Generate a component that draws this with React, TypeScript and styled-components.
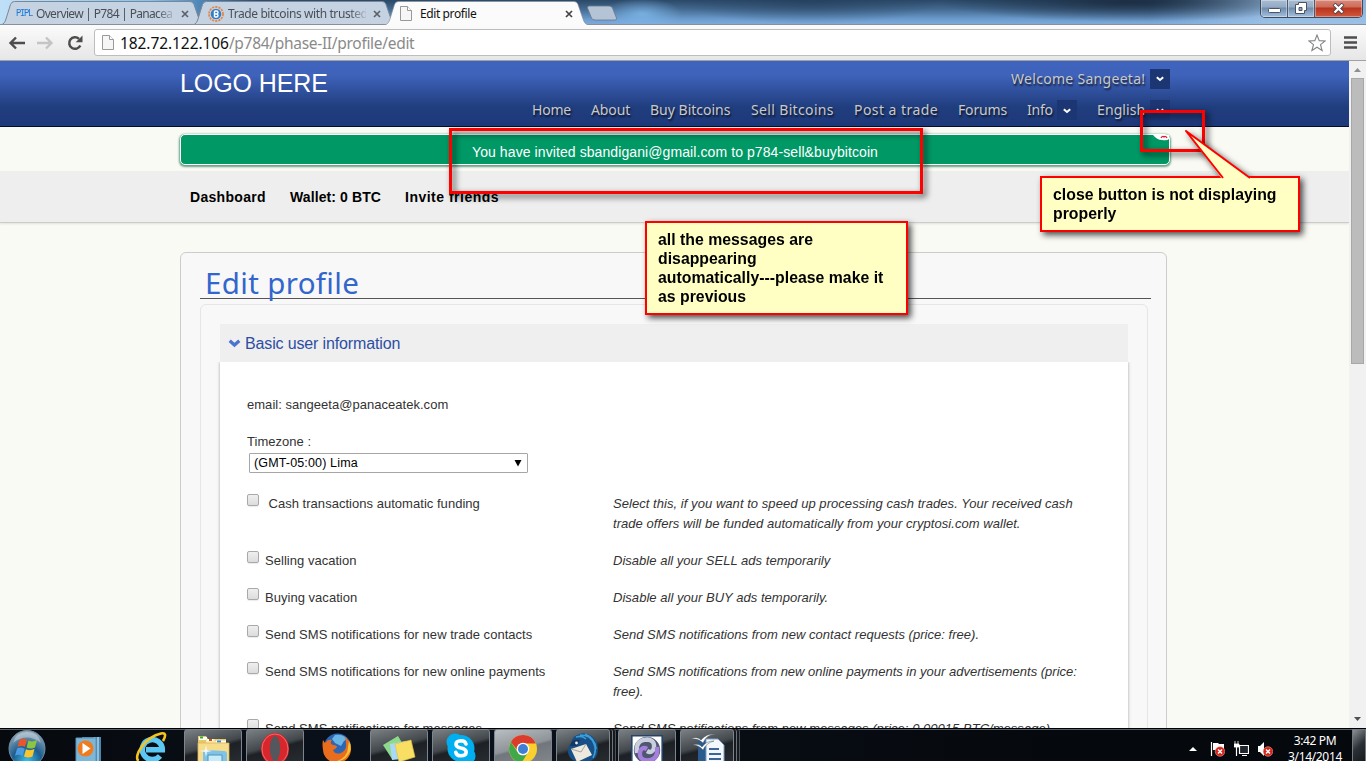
import React from "react";
import styled, { createGlobalStyle, css } from "styled-components";

const ARIAL = '"Liberation Sans", Arial, sans-serif';
const HUMANIST = '"Noto Sans", "Open Sans", sans-serif';

const GlobalStyle = createGlobalStyle`
  * { box-sizing: border-box; }
  html, body { margin: 0; padding: 0; overflow: hidden; }
  p, h1, h2 { margin: 0; font-weight: normal; }
`;

const Desktop = styled.div`
  position: relative;
  display: flex;
  flex-direction: column;
  width: 1366px;
  height: 761px;
  overflow: hidden;
  background: #fff;
  font-family: ${ARIAL};
`;

/* ---------- browser chrome ---------- */

const TabStrip = styled.div`
  display: flex;
  align-items: flex-start;
  height: 25px;
  flex: none;
  padding-left: 1px;
  border-bottom: 1px solid #8a9099;
  background:
    radial-gradient(ellipse 40px 16px at 642px 14px, rgba(130, 190, 240, 0.75), transparent),
    radial-gradient(ellipse 130px 22px at 810px 2px, rgba(35, 60, 90, 0.6), transparent),
    radial-gradient(ellipse 190px 20px at 1130px 2px, rgba(25, 42, 62, 0.9), transparent),
    linear-gradient(90deg, #bfe0f7 0, #84c4f0 150px, #4e86b8 200px, transparent 260px),
    linear-gradient(90deg, transparent 1150px, rgba(160, 196, 232, 0.85) 1270px),
    linear-gradient(#2b4867 0, #43698f 9px, #6f9fd2 20px, #80acdc 25px);
`;

const TabBox = styled.div<{ $active?: boolean }>`
  position: relative;
  display: flex;
  align-items: center;
  width: 203px;
  height: 25px;
  flex: none;
  margin-right: -11px;
  padding: 2px 15px 0 15px;
  z-index: ${(p) => (p.$active ? 2 : 1)};
  color: ${(p) => (p.$active ? "#111" : "#4a4f57")};
`;

const TabShape = styled.svg`
  position: absolute;
  left: 0;
  top: 0;
`;

const TabIcon = styled.span`
  position: relative;
  display: flex;
  width: 20px;
  flex: none;
`;

const TabTitle = styled.span<{ $fade?: boolean; $ls?: number }>`
  position: relative;
  flex: 1;
  overflow: hidden;
  white-space: nowrap;
  font: 12px/18px ${HUMANIST};
  letter-spacing: ${(p) => p.$ls ?? -0.4}px;
  margin-right: 7px;
  ${(p) =>
    p.$fade &&
    css`
      mask-image: linear-gradient(90deg, #000 88%, rgba(0, 0, 0, 0.15));
    `}
`;

const TabClose = styled.svg`
  position: relative;
  flex: none;
`;

const NewTab = styled.svg`
  margin: 5px 0 0 9px;
  flex: none;
`;

const WindowButtons = styled.div`
  display: flex;
  height: 18px;
  margin: 0 3px 0 auto;
  border: 1px solid #3b4a5e;
  border-top: 0;
  border-radius: 0 0 5px 5px;
  overflow: hidden;
`;

const WindowButton = styled.div<{ $close?: boolean }>`
  display: flex;
  align-items: center;
  justify-content: center;
  width: ${(p) => (p.$close ? 47 : 27)}px;
  border-right: ${(p) => (p.$close ? "0" : "1px solid #4a5b70")};
  box-shadow: inset 0 0 0 1px rgba(255, 255, 255, 0.35);
  background: ${(p) =>
    p.$close
      ? "linear-gradient(#d98a7c 0, #cf6a58 7px, #b8331d 8px, #d2593e 17px)"
      : "linear-gradient(#a9bcd2 0, #94aac4 7px, #6e8bad 8px, #a5c0de 17px)"};
`;

const Toolbar = styled.div`
  display: flex;
  align-items: center;
  height: 36px;
  flex: none;
  padding: 0 9px 0 8px;
  background: linear-gradient(#fbfbfb, #e6e6e6);
  border-bottom: 1px solid #a2a2a2;
`;

const NavIcons = styled.div`
  display: flex;
  align-items: center;
  gap: 12px;
  width: 86px;
`;

const AddressBar = styled.div`
  display: flex;
  align-items: center;
  width: 1237px;
  height: 27px;
  padding: 0 4px 0 7px;
  background: #fff;
  border: 1px solid #bdbdbd;
  border-radius: 3px;
`;

const Url = styled.span`
  flex: 1;
  margin-left: 6px;
  font: 15.5px/22px ${HUMANIST};
  letter-spacing: -0.3px;
  color: #8a8a8a;
  b { font-weight: normal; color: #111; letter-spacing: -0.08px; }
`;

const MenuIcon = styled.svg`
  margin-left: auto;
`;

/* ---------- page ---------- */

const Viewport = styled.div`
  display: flex;
  height: 667px;
  flex: none;
`;

const Page = styled.div`
  width: 1349px;
  height: 667px;
  overflow: hidden;
  background: #f9faf4;
`;

const Header = styled.header`
  display: flex;
  height: 66px;
  padding: 0 179px 0 180px;
  border-bottom: 1px solid #060d2c;
  background: linear-gradient(#3f64bd 0, #3f63bb 14px, #203d7e 46px, #1e397a 65px);
`;

const Logo = styled.div`
  padding-top: 7px;
  font: 25px/30px ${ARIAL};
  letter-spacing: -0.1px;
  color: #fff;
  white-space: nowrap;
`;

const HeaderRight = styled.div`
  display: flex;
  flex-direction: column;
  align-items: flex-end;
  margin-left: auto;
  padding-top: 8px;
`;

const Welcome = styled.div`
  display: flex;
  align-items: center;
  gap: 4px;
`;

const Menu = styled.nav`
  display: flex;
  align-items: center;
  margin-top: 11px;
`;

const HeaderText = styled.span<{ $w: number; $ls?: number; $gap?: number }>`
  width: ${(p) => p.$w}px;
  margin-right: ${(p) => p.$gap ?? 0}px;
  letter-spacing: ${(p) => p.$ls ?? 0}px;
  font: 14px/20px ${HUMANIST};
  color: #c9c9c9;
  white-space: nowrap;
  text-shadow: 1px 2px 2px rgba(0, 0, 0, 0.7);
`;

const DropButton = styled.span<{ $gap?: number; $low?: boolean }>`
  display: flex;
  align-items: center;
  justify-content: center;
  width: 20px;
  height: 20px;
  padding-top: ${(p) => (p.$low ? 2 : 0)}px;
  margin-right: ${(p) => p.$gap ?? 0}px;
  background: #1c3573;
`;

const Notice = styled.div`
  position: relative;
  width: 990px;
  height: 31px;
  margin: 7px 0 0 180px;
  padding-left: 291px;
  border: 1px solid #fff;
  border-radius: 5px;
  background: #009966;
  box-shadow: 0 1px 2px 1px rgba(30, 110, 80, 0.65);
  font: 14px/35px ${ARIAL};
  letter-spacing: 0.09px;
  color: #fff;
  white-space: nowrap;
`;

const NoticeClose = styled.svg`
  position: absolute;
  right: 0;
  top: 0;
`;

const SubNav = styled.div`
  display: flex;
  gap: 24px;
  height: 52px;
  margin-top: 6px;
  padding-left: 190px;
  background: #eee;
  border-bottom: 1px solid #ccc;
  box-shadow: 0 1px 2px rgba(0, 0, 0, 0.1);
  font: bold 14px/53px ${ARIAL};
  color: #000;
`;

const SubLink = styled.span<{ $w: number; $ls: number }>`
  width: ${(p) => p.$w}px;
  letter-spacing: ${(p) => p.$ls}px;
  white-space: nowrap;
`;

const Card = styled.main`
  width: 987px;
  height: 520px;
  margin: 29px 0 0 180px;
  padding: 0 15px 0 19px;
  border: 1px solid #ccc;
  border-radius: 6px;
  background: #f8f8f8;
`;

const Title = styled.h1`
  height: 46px;
  padding-left: 5px;
  border-bottom: 1px solid #555;
  font: 29.5px/59px ${HUMANIST};
  letter-spacing: 0.35px;
  color: #3366cc;
  white-space: nowrap;
`;

const Inner = styled.section`
  width: 948px;
  height: 480px;
  margin-top: 5px;
  padding: 19px 19px 0;
  border: 1px solid #e6e6e6;
  border-radius: 6px;
`;

const SectionHead = styled.h2`
  display: flex;
  align-items: center;
  gap: 4px;
  height: 38px;
  padding-left: 8px;
  background: #efefef;
  font: 16px/20px ${ARIAL};
  letter-spacing: -0.14px;
  color: #2d4ea3;

  span { padding-top: 2px; }
`;

const Panel = styled.div`
  height: 440px;
  padding: 33px 27px 0;
  background: #fff;
  box-shadow: 0 0 3px rgba(0, 0, 0, 0.35);
  clip-path: inset(0 -4px -4px -4px);
  font: 13px/20px ${ARIAL};
  letter-spacing: 0.03px;
  color: #333;
`;

const Line = styled.p`
  margin-bottom: 17px;
`;

const Select = styled.div`
  display: flex;
  align-items: center;
  justify-content: space-between;
  width: 279px;
  height: 20px;
  margin: -16px 0 21px 2px;
  padding: 0 5px 0 4px;
  border: 1px solid #a6a6a6;
  border-radius: 1px;
  background: #fff;
  font-size: 12.5px;
  letter-spacing: 0.15px;
  color: #000;
`;

const OptionRow = styled.div`
  display: flex;
  margin-bottom: 17px;
`;

const OptionLabel = styled.div<{ $indent?: boolean }>`
  display: flex;
  width: 366px;
  flex: none;
  gap: ${(p) => (p.$indent ? 9.5 : 6)}px;
  white-space: nowrap;
`;

const Checkbox = styled.span`
  width: 12px;
  height: 12px;
  flex: none;
  border: 1px solid #a9a9a9;
  border-radius: 2px;
  background: linear-gradient(#efefef, #dcdcdc);
  box-shadow: 0 1px 1px rgba(0, 0, 0, 0.08);
`;

const OptionHelp = styled.em<{ $ls?: number }>`
  letter-spacing: ${(p) => p.$ls ?? 0.03}px;
  white-space: pre;
`;

const ScrollBar = styled.div`
  display: flex;
  flex-direction: column;
  align-items: center;
  width: 17px;
  background: #f1f1f1;
`;

const ScrollThumb = styled.div`
  width: 13px;
  height: 286px;
  border: 1px solid #a8a8a8;
  background: #bcbcbc;
`;

const ScrollArrow = styled.svg<{ $bottom?: boolean }>`
  margin-top: ${(p) => (p.$bottom ? "auto" : "0")};
`;

/* ---------- annotations ---------- */

const Marker = styled.div<{ $x: number; $y: number; $w: number; $h: number }>`
  position: absolute;
  left: ${(p) => p.$x}px;
  top: ${(p) => p.$y}px;
  width: ${(p) => p.$w}px;
  height: ${(p) => p.$h}px;
  border: 3px solid #f00;
  filter: drop-shadow(3px 3px 3px rgba(0, 0, 0, 0.75));
`;

const Callout = styled.div<{ $x: number; $y: number; $w: number; $h: number }>`
  position: absolute;
  left: ${(p) => p.$x}px;
  top: ${(p) => p.$y}px;
  width: ${(p) => p.$w}px;
  height: ${(p) => p.$h}px;
  padding: 7px 11px;
  border: 2px solid #f00;
  background: #ffffc4;
  filter: drop-shadow(3px 3px 3px rgba(0, 0, 0, 0.7));
  font: bold 15.8px/19px ${ARIAL};
  letter-spacing: 0.02px;
  color: #000;
  white-space: pre;
`;

const CalloutTail = styled.svg`
  position: absolute;
  left: 140px;
  top: -50px;
`;

/* ---------- taskbar ---------- */

const Taskbar = styled.div`
  display: flex;
  height: 33px;
  flex: none;
  border-top: 1px solid #000;
  box-shadow: inset 0 1px 0 #56616e;
  background: linear-gradient(90deg, #06090d, #0b121c 30%, #05080c 80%);
  overflow: hidden;
`;

const TaskSlot = styled.div<{ $open?: boolean; $lit?: boolean; $stack?: boolean }>`
  display: flex;
  justify-content: center;
  width: ${(p) => (p.$stack ? 54 : 58)}px;
  height: 40px;
  flex: none;
  margin-right: ${(p) => (p.$stack ? 8 : 4)}px;
  border-radius: 3px;
  ${(p) =>
    p.$open &&
    css`
      border: 1px solid #7e858c;
      background: ${p.$lit
        ? "linear-gradient(165deg, #b9bec2 0, #8e9499 45%, #70767b 50%, #868b90 100%)"
        : "linear-gradient(165deg, #7b8085 0, #43484d 42%, #1d2125 50%, #2b3035 100%)"};
    `}
  ${(p) =>
    p.$stack &&
    css`
      box-shadow: 2px 0 0 #15191e, 3px 0 0 #6d747b, 5px 0 0 #15191e, 6px 0 0 #4b5259;
    `}
`;

const StartSlot = styled.div`
  width: 60px;
  flex: none;
  padding-left: 8px;
`;

const Tray = styled.div`
  display: flex;
  align-items: flex-start;
  margin-left: auto;
`;

const TrayIcons = styled.div`
  display: flex;
  align-items: center;
  gap: 9px;
  padding-top: 12px;

  svg:first-child { margin-right: 4px; }
`;

const Clock = styled.div`
  width: 74px;
  margin: 4px 0 0 5px;
  font: 12px/16px ${HUMANIST};
  letter-spacing: -0.35px;
  text-align: center;
  color: #fff;
  white-space: nowrap;
`;

const ShowDesktop = styled.div`
  width: 14px;
  height: 40px;
  border: 1px solid #727a82;
  background: linear-gradient(135deg, #8b9197, #2b3036 45%, #0e1216);
`;

/* ---------- small drawings ---------- */

const PageIcon = ({ w = 12, h = 15 }: { w?: number; h?: number }) => (
  <svg width={w} height={h} viewBox="0 0 12 15">
    <path d="M.5.5h7l4 4v10H.5z" fill="#f6f6f6" stroke="#999" />
    <path d="M7.5.5v4h4" fill="#fff" stroke="#999" />
  </svg>
);

const BitcoinIcon = () => (
  <svg width="16" height="16" viewBox="0 0 16 16">
    <circle cx="8" cy="8" r="7" fill="#cfd6df" stroke="#e2884a" strokeWidth="1.8" strokeDasharray="2.2 1" />
    <circle cx="8" cy="8" r="5.3" fill="#2f7fc8" />
    <path d="M6.500 5v6M6.500 5h2a1.400 1.400 0 0 1 0 3h-2M8.500 8a1.500 1.500 0 0 1 0 3h-2" fill="none" stroke="#fff" strokeWidth="1.4" />
  </svg>
);

const PiplLabel = styled.span`
  font: 9px/14px "Liberation Mono", monospace;
  letter-spacing: -1.4px;
  color: #1a7ad8;
  transform: scaleY(1.15);
`;

const CloseX = ({ color }: { color: string }) => (
  <TabClose width="8" height="8" viewBox="0 0 8 8">
    <path d="M1 1l6 6M7 1L1 7" stroke={color} strokeWidth="1.7" />
  </TabClose>
);

const Chevron = ({ color = "#fff", w = 8, h = 6, sw = 2 }: { color?: string; w?: number; h?: number; sw?: number }) => (
  <svg width={w} height={h} viewBox="0 0 8 6">
    <path d="M.8 1.200 4 4l3.200-2.800" fill="none" stroke={color} strokeWidth={sw} />
  </svg>
);

type TabProps = { title: string; icon: React.ReactNode; active?: boolean; fade?: boolean; ls?: number };

const Tab = ({ title, icon, active, fade, ls }: TabProps) => (
  <TabBox $active={active}>
    <TabShape width="203" height="25" viewBox="0 0 203 25">
      <path
        d="M0 25C3 24 4 22 5 19L9.500 4.500Q10.500 1.500 13.500 1.500H189Q192 1.500 193 4.500L198 19C199 22 200 24 203 25"
        fill={active ? "#fbfbfb" : "#c5d2e2"}
        stroke={active ? "#7e8894" : "#7a8796"}
        strokeWidth={active ? 0.6 : 1}
      />
      {!active && <path d="M0 24.500h203" stroke="#8a9099" />}
    </TabShape>
    <TabIcon>{icon}</TabIcon>
    <TabTitle $fade={fade} $ls={ls}>{title}</TabTitle>
    <CloseX color={active ? "#444" : "#5b6169"} />
  </TabBox>
);

const StartOrb = () => (
  <svg width="38" height="40" viewBox="0 0 38 40">
    <defs>
      <radialGradient id="orb" cx="50%" cy="85%" r="80%">
        <stop offset="0" stopColor="#38c1ee" />
        <stop offset="0.5" stopColor="#1d5d8e" />
        <stop offset="1" stopColor="#8ba3b5" />
      </radialGradient>
    </defs>
    <circle cx="19" cy="19.500" r="18" fill="url(#orb)" stroke="#6d8ca3" />
    <path d="M5 14Q19 3 33 14Q30 3 19 3T5 14z" fill="#fff" opacity=".35" />
    <path d="M11.500 11Q15 8.500 19 11L17 18Q13 16 9.500 18z" fill="#e8562a" />
    <path d="M20.500 11.500Q24.500 13.500 29 11L27 18.500Q23 20.500 18.500 18.500z" fill="#8cc63e" />
    <path d="M9 19.500Q13 17.500 16.700 19.700L14.500 27Q11 24.500 7 26.700z" fill="#4a9be0" />
    <path d="M18 20.200Q22 22.200 26.500 20L24.500 27.500Q20.500 29.500 16 27.500z" fill="#fbc62c" />
  </svg>
);

const MediaPlayer = () => (
  <svg width="30" height="36" viewBox="0 0 30 36">
    <path d="M8 8h19v26H8z" fill="#4d86ab" />
    <path d="M24 8v26M20.500 8v26" stroke="#a9d3ea" strokeWidth="1.500" />
    <path d="M2 9h20v26H2z" fill="#7db7d8" stroke="#5b94b8" />
    <circle cx="11.500" cy="19.500" r="8" fill="#f07a1d" />
    <path d="M8.500 14l8 5.500-8 5.500z" fill="#fff" />
  </svg>
);

const Explorer = () => (
  <svg width="34" height="38" viewBox="0 0 34 38">
    <path d="M2 6h8l2 3h18v28H2z" fill="#e9c967" />
    <path d="M3 7h8v3h-8z" fill="#fff" />
    <path d="M4 6.500h3v2H4z" fill="#2bb234" />
    <path d="M10 9h8l2 3h10v4H10z" fill="#fbe9a8" />
    <path d="M11 9h6v2h-6z" fill="#fff" /><path d="M13 9h3v2h-3z" fill="#dc4a24" />
    <path d="M20 10.500h10v2H20z" fill="#fff" /><path d="M21 10.500h4v2h-4z" fill="#2e8be0" />
    <path d="M2 13h31v25H2z" fill="#f7dd8b" stroke="#d9b85a" strokeWidth=".8" />
    <path d="M7 22q0-2 3-2l18 1q3 0 3 3v14H7z" fill="#7fc3e6" />
    <path d="M12 25h14v13H12z" fill="#c9ebf8" stroke="#4d94bf" />
    <path d="M10 15l1 5 5 1-5 1-1 5-1-5-5-1 5-1z" fill="#fff" opacity=".85" />
  </svg>
);

const InternetExplorer = () => (
  <svg width="34" height="38" viewBox="0 0 34 38">
    <path d="M26 27a10 10 0 1 1 2.300-6.200H12" fill="none" stroke="#5cc7f2" strokeWidth="5.500" />
    <path d="M4.500 32C-1 27 11 8 27 4.500Q34 3 29 12" fill="none" stroke="#f4c521" strokeWidth="2.600" />
  </svg>
);

const Opera = () => (
  <svg width="30" height="36" viewBox="0 0 30 36">
    <ellipse cx="15" cy="19" rx="14" ry="16" fill="#d8262c" />
    <ellipse cx="15" cy="19" rx="13" ry="15" fill="none" stroke="#f06a6a" />
    <ellipse cx="15" cy="18.500" rx="5.200" ry="12.500" fill="#54585c" />
  </svg>
);

const Firefox = () => (
  <svg width="32" height="36" viewBox="0 0 32 36">
    <circle cx="16.500" cy="18" r="13.500" fill="#2c66b4" />
    <path d="M14 6q8-1 12 4l-3 2-3 5-6-3-3-4z" fill="#69b5e6" />
    <path d="M2 11l2 3q3-4 7-3-3 3 1 5 4 0 4 2-1 2-4 3 2 5 8 3 6-3 5-10 0-5-3-7 8 4 8 12a14 14 0 0 1-28 2Q1 15 2 11z" fill="#ea6d1d" />
    <path d="M28 12q4 8-1 14-4 6-11 6 11-4 11-14z" fill="#f7c52e" />
  </svg>
);

const StickyNotes = () => (
  <svg width="36" height="38" viewBox="0 0 36 38">
    <path d="M2 15L17 6l9 15-15 8z" fill="#8fd98a" />
    <path d="M9 14l16-3 4 17-18 2z" fill="#a9d9f7" />
    <path d="M14 14l16-4 4 17-16 5z" fill="#f8de62" stroke="#e0bf3e" strokeWidth=".6" />
  </svg>
);

const Skype = () => (
  <svg width="32" height="38" viewBox="0 0 32 38">
    <circle cx="10" cy="12" r="8.500" fill="#00aff0" />
    <circle cx="22" cy="26" r="8.500" fill="#00aff0" />
    <circle cx="16" cy="18.500" r="13.500" fill="#00aff0" />
    <path
      d="M21 14Q20 10.800 16 10.800Q11 11 11 14.200Q11 17 15.800 18Q21.200 19 21.200 22.200Q21 25.800 16 25.800Q11.500 25.800 10.800 22.300"
      fill="none"
      stroke="#fff"
      strokeWidth="3.600"
      strokeLinecap="round"
    />
  </svg>
);

const Chrome = () => (
  <svg width="30" height="36" viewBox="0 0 30 36">
    <circle cx="15" cy="19" r="14" fill="#f9d02e" />
    <path d="M2.900 12A14 14 0 0 1 27.800 13.500H15a6 6 0 0 0-5.500 7z" fill="#dc3c2e" />
    <path d="M2.900 12A14 14 0 0 0 13.500 32.900L20 22.500a6 6 0 0 1-10.500-.500z" fill="#3fa94a" />
    <circle cx="15" cy="19" r="6.300" fill="#fff" />
    <circle cx="15" cy="19" r="5" fill="#3f7fd6" />
  </svg>
);

const Thunderbird = () => (
  <svg width="34" height="36" viewBox="0 0 32 36">
    <path d="M10 5q6-3 11-1 10 4 10 15 0 11-11 13-16 2-19-9 0-7 3-10 1-6 6-8z" fill="#174f86" />
    <path d="M13 5q11 0 14 9 3 6-1 14M18 4q10 4 11 15M9 7q6-2 10 2" fill="none" stroke="#3c9cd4" strokeWidth="1.600" />
    <path d="M4 19l15-5 6 11-15 7z" fill="#eee9df" />
    <path d="M4 19l10 3 5-8" fill="none" stroke="#a9a298" />
    <path d="M3 16q2-8 10-6l-3 6z" fill="#14385e" />
    <circle cx="9.500" cy="13" r="1.400" fill="#e8eef4" />
  </svg>
);

const Swirl = () => (
  <svg width="32" height="36" viewBox="0 0 32 36">
    <path d="M.8 5.800h30.400V36H.800z" fill="#fff" stroke="#23446f" strokeWidth="1.600" />
    <circle cx="16" cy="20" r="13.200" fill="#4f5670" />
    <path d="M6 23Q4 10 16 9.500Q24 10 23 18Q21 24 16 21" fill="none" stroke="#c9cfdd" strokeWidth="4.400" />
    <path d="M26 17Q28 30 16 30.500Q8 30 9 22Q11 16 16 19" fill="none" stroke="#a57fdc" strokeWidth="4.400" />
  </svg>
);

const Writer = () => (
  <svg width="36" height="38" viewBox="0 0 36 38">
    <path d="M9 9h10v29H9z" fill="#2b5a8c" />
    <path d="M17 9h12l6 6v23H17z" fill="#f4f8fc" stroke="#7d9fc2" />
    <path d="M20 19h10M20 24h12M20 29h12M20 34h12" stroke="#3b6796" strokeWidth="1.800" />
    <path d="M2 9q6-3 10 1 6-7 14-6-9 1-12 9-5-5-12-4zM4 15q6-2 9 2 4-6 12-6-8 2-11 9-4-5-10-5z" fill="#fff" stroke="#51606f" strokeWidth=".5" />
  </svg>
);

const ErrorBadge = ({ x, y }: { x: number; y: number }) => (
  <g>
    <circle cx={x} cy={y} r="4.800" fill="#d8231a" stroke="#f09a90" strokeWidth=".6" />
    <path d={`M${x - 2} ${y - 2}l4 4M${x + 2} ${y - 2}l-4 4`} stroke="#fff" strokeWidth="1.500" />
  </g>
);

/* ---------- content ---------- */

const OPTIONS = [
  { label: "Cash transactions automatic funding", indent: true, ls: 0.05, help: "Select this, if you want to speed up processing cash trades. Your received cash\ntrade offers will be funded automatically from your cryptosi.com wallet." },
  { label: "Selling vacation", ls: 0.02, help: "Disable all your SELL ads temporarily" },
  { label: "Buying vacation", help: "Disable all your BUY ads temporarily." },
  { label: "Send SMS notifications for new trade contacts", help: "Send SMS notifications from new contact requests (price: free)." },
  { label: "Send SMS notifications for new online payments", ls: 0, help: "Send SMS notifications from new online payments in your advertisements (price:\nfree)." },
  { label: "Send SMS notifications for messages", help: "Send SMS notifications from new messages (price: 0.00015 BTC/message)." },
];

const BrowserChrome = () => (
  <>
    <TabStrip>
      <Tab title="Overview | P784 | Panacea" fade ls={-0.68} icon={<PiplLabel>PIPL</PiplLabel>} />
      <Tab title="Trade bitcoins with trusted" fade icon={<BitcoinIcon />} />
      <Tab title="Edit profile" active icon={<PageIcon />} />
      <NewTab width="32" height="16" viewBox="0 0 32 16">
        <path d="M3.500 1H23q2.500 0 3.500 2l4 10q.5 2-1.500 2H9q-2.500 0-3.500-2L1.500 3Q1 1 3.500 1z" fill="#b4c4d6" stroke="#66788e" strokeWidth=".8" />
      </NewTab>
      <WindowButtons>
        <WindowButton>
          <svg width="13" height="16"><rect x=".5" y="7.5" width="12" height="4" rx="1" fill="#fff" stroke="#4a5361" /></svg>
        </WindowButton>
        <WindowButton>
          <svg width="13" height="14">
            <path d="M3.500.5h8v8h-2v3h-9v-9h3z" fill="#fff" stroke="#4a5361" />
            <path d="M4 5.500h3v3H4z" fill="#8fa6c2" stroke="#4a5361" />
          </svg>
        </WindowButton>
        <WindowButton $close>
          <svg width="13" height="12" viewBox="0 0 13 12">
            <path d="M2 1l9 9M11 1l-9 9" stroke="#4a3f48" strokeWidth="4" />
            <path d="M2.500 1.500l8 8M10.500 1.500l-8 8" stroke="#fff" strokeWidth="2.400" />
          </svg>
        </WindowButton>
      </WindowButtons>
    </TabStrip>
    <Toolbar>
      <NavIcons>
        <svg width="17" height="14" viewBox="0 0 17 14"><path d="M8 1.500L2.500 7 8 12.500M2.500 7H17" fill="none" stroke="#4d4d4d" strokeWidth="2.400" /></svg>
        <svg width="17" height="14" viewBox="0 0 17 14"><path d="M9 1.500L14.500 7 9 12.500M14.500 7H0" fill="none" stroke="#c4c4c4" strokeWidth="2.400" /></svg>
        <svg width="17" height="16" viewBox="-1 0 17 16">
          <path d="M13.300 10.500A5.800 5.800 0 1 1 12 3.800" fill="none" stroke="#4d4d4d" strokeWidth="2.500" />
          <path d="M15.500.5v6.800H8.700z" fill="#4d4d4d" />
        </svg>
      </NavIcons>
      <AddressBar>
        <PageIcon w={12} h={15} />
        <Url><b>182.72.122.106</b>/p784/phase-II/profile/edit</Url>
        <svg width="18" height="18" viewBox="0 0 18 18">
          <path d="M9 1l2.200 5.600 6 .3-4.700 3.700 1.600 5.900L9 13.200l-5.100 3.300 1.600-5.900L.8 6.900l6-.3z" fill="#fff" stroke="#858585" strokeWidth="1.100" />
        </svg>
      </AddressBar>
      <MenuIcon width="13" height="13"><path d="M0 1.500h13M0 6.500h13M0 11.500h13" stroke="#4d4d4d" strokeWidth="2.600" /></MenuIcon>
    </Toolbar>
  </>
);

const App = () => (
  <Desktop>
    <GlobalStyle />
    <BrowserChrome />
    <Viewport>
      <Page>
        <Header>
          <Logo>LOGO HERE</Logo>
          <HeaderRight>
            <Welcome>
              <HeaderText $w={135} $ls={0.3}>Welcome Sangeeta!</HeaderText>
              <DropButton><Chevron /></DropButton>
            </Welcome>
            <Menu>
              <HeaderText $w={39} $gap={20} $ls={-0.2}>Home</HeaderText>
              <HeaderText $w={39} $gap={20} $ls={-0.1}>About</HeaderText>
              <HeaderText $w={81} $gap={20}>Buy Bitcoins</HeaderText>
              <HeaderText $w={83} $gap={20} $ls={0.35}>Sell Bitcoins</HeaderText>
              <HeaderText $w={84} $gap={20} $ls={0.45}>Post a trade</HeaderText>
              <HeaderText $w={49} $gap={20} $ls={-0.15}>Forums</HeaderText>
              <HeaderText $w={26} $gap={4} $ls={-0.2}>Info</HeaderText>
              <DropButton $gap={20} $low><Chevron /></DropButton>
              <HeaderText $w={49} $gap={4} $ls={0.1}>English</HeaderText>
              <DropButton $low><Chevron /></DropButton>
            </Menu>
          </HeaderRight>
        </Header>
        <Notice>
          You have invited sbandigani@gmail.com to p784-sell&amp;buybitcoin
          <NoticeClose width="16" height="6" viewBox="0 0 16 6">
            <path d="M0 0q4 5 9 5 5 1 7-1V0z" fill="#fff" />
            <path d="M8 3q1.500-2.500 3-1 1.500-1.500 3 1" fill="none" stroke="#e0182a" strokeWidth="1.200" />
          </NoticeClose>
        </Notice>
        <SubNav>
          <SubLink $w={76} $ls={0.3}>Dashboard</SubLink>
          <SubLink $w={91} $ls={0.1}>Wallet: 0 BTC</SubLink>
          <SubLink $w={94} $ls={0.5}>Invite friends</SubLink>
        </SubNav>
        <Card>
          <Title>Edit profile</Title>
          <Inner>
            <SectionHead>
              <Chevron color="#4a73cf" w={13} h={9} sw={2.2} />
              <span>Basic user information</span>
            </SectionHead>
            <Panel>
              <Line>email: sangeeta@panaceatek.com</Line>
              <Line>Timezone :</Line>
              <Select>
                (GMT-05:00) Lima
                <svg width="8" height="7"><path d="M0.500 0h7L4 6.500z" fill="#000" /></svg>
              </Select>
              {OPTIONS.map((o) => (
                <OptionRow key={o.label}>
                  <OptionLabel $indent={o.indent}>
                    <Checkbox />
                    {o.label}
                  </OptionLabel>
                  <OptionHelp $ls={o.ls}>{o.help}</OptionHelp>
                </OptionRow>
              ))}
            </Panel>
          </Inner>
        </Card>
      </Page>
      <ScrollBar>
        <ScrollArrow width="17" height="17"><path d="M5 11h7L8.500 7z" fill="#8f8f8f" /></ScrollArrow>
        <ScrollThumb />
        <ScrollArrow $bottom width="17" height="17"><path d="M5 6h7l-3.500 4z" fill="#505050" /></ScrollArrow>
      </ScrollBar>
    </Viewport>
    <Taskbar>
      <StartSlot><StartOrb /></StartSlot>
      <TaskSlot><MediaPlayer /></TaskSlot>
      <TaskSlot><InternetExplorer /></TaskSlot>
      <TaskSlot $open><Explorer /></TaskSlot>
      <TaskSlot $open><Opera /></TaskSlot>
      <TaskSlot><Firefox /></TaskSlot>
      <TaskSlot $open><StickyNotes /></TaskSlot>
      <TaskSlot $open><Skype /></TaskSlot>
      <TaskSlot $open $lit><Chrome /></TaskSlot>
      <TaskSlot $open $stack><Thunderbird /></TaskSlot>
      <TaskSlot $open><Swirl /></TaskSlot>
      <TaskSlot $open $stack><Writer /></TaskSlot>
      <Tray>
        <TrayIcons>
          <svg width="8" height="16"><path d="M0 10h8L4 6z" fill="#fff" /></svg>
          <svg width="15" height="16">
            <path d="M1.500 1v14" stroke="#fff" strokeWidth="1.200" /><path d="M3 2h5l1 1h5v6H3z" fill="#fff" />
            <ErrorBadge x={10} y={10.5} />
          </svg>
          <svg width="15" height="16">
            <path d="M5.500 4.500h9v8h-9zM8 14.500h5M2.500 6v9" fill="#20262c" stroke="#fff" strokeWidth="1.200" />
            <path d="M0 3h5v3H0zM1 0v3M4 0v3" fill="#fff" stroke="#fff" strokeWidth=".8" />
          </svg>
          <svg width="15" height="16">
            <path d="M0 5h2l4-4v14l-4-4H0z" fill="#fff" />
            <ErrorBadge x={10} y={10.5} />
          </svg>
        </TrayIcons>
        <Clock>3:42 PM<br />3/14/2014</Clock>
        <ShowDesktop />
      </Tray>
    </Taskbar>
    <Marker $x={449} $y={128} $w={474} $h={66} />
    <Marker $x={1140} $y={110} $w={65} $h={42} />
    <Callout $x={645} $y={221} $w={263} $h={94}>
      {"all the messages are\ndisappearing\nautomatically---please make it\nas previous"}
    </Callout>
    <Callout $x={1040} $y={176} $w={260} $h={56}>
      {"close button is not displaying\nproperly"}
      <CalloutTail width="80" height="54" viewBox="0 0 80 54">
        <path d="M40 51L4 3l66 48z" fill="#ffffc4" />
        <path d="M41 50L4 3l64 47" fill="none" stroke="#f00" strokeWidth="2" strokeLinejoin="round" />
      </CalloutTail>
    </Callout>
  </Desktop>
);

export default App;
